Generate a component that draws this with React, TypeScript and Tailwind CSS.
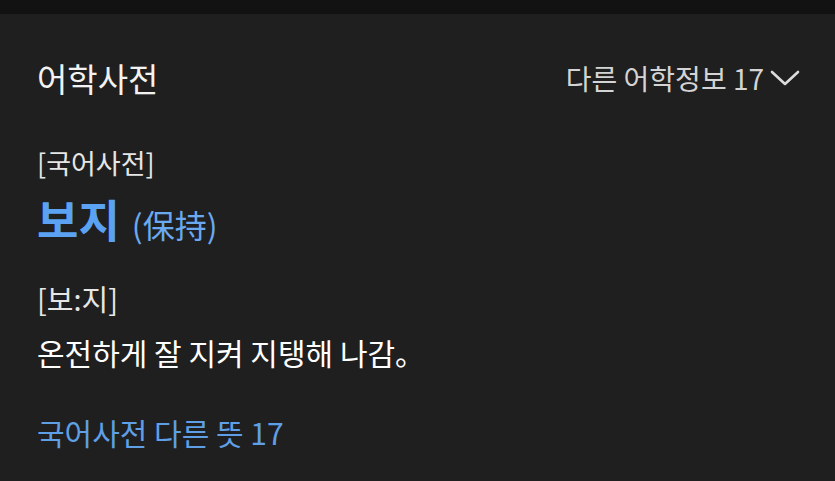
export default function App() {
  const font = { fontFamily: '"Noto Sans CJK KR", "Noto Sans", sans-serif' };

  return (
    <div className="w-[835px] h-[481px] overflow-hidden bg-[#1f1f1f]" style={font}>
      {/* top strip */}
      <div className="h-[14px] bg-[#121212]" />

      <div className="pl-[37px] pr-[35px]">
        {/* Header */}
        <div className="mt-[40px] flex h-[48px] items-center justify-between">
          <span className="text-[33px] leading-[48px] text-[#f2f2f2]">어학사전</span>
          <button className="flex items-center gap-[6px] text-[28px] leading-[48px] text-[#d4d4d4]">
            <span>다른 어학정보 17</span>
            <svg width="30" height="18" viewBox="0 0 30 18" fill="none">
              <path d="M2 3 L15 15 L28 3" stroke="#dcdcdc" strokeWidth="2.6" strokeLinecap="round" strokeLinejoin="round" />
            </svg>
          </button>
        </div>

        {/* Entry */}
        <div className="mt-[41px] text-[27px] leading-[40px] text-[#e6e6e6]">[국어사전]</div>

        <div className="mt-[10px] flex items-baseline gap-[12px] leading-[52px]">
          <span className="text-[45px] font-bold text-[#5ba2f2]">보지</span>
          <span className="text-[32px] text-[#6aa9ef]">(保持)</span>
        </div>

        <div className="mt-[28px] text-[29px] leading-[40px] text-[#e6e6e6]">[보:지]</div>

        <div className="mt-[14px] text-[30px] leading-[40px] text-white">
          온전하게 잘 지켜 지탱해 나감。
        </div>

        <div className="mt-[40px] text-[30px] leading-[40px] text-[#5f9fe6]">국어사전 다른 뜻 17</div>
      </div>
    </div>
  );
}
